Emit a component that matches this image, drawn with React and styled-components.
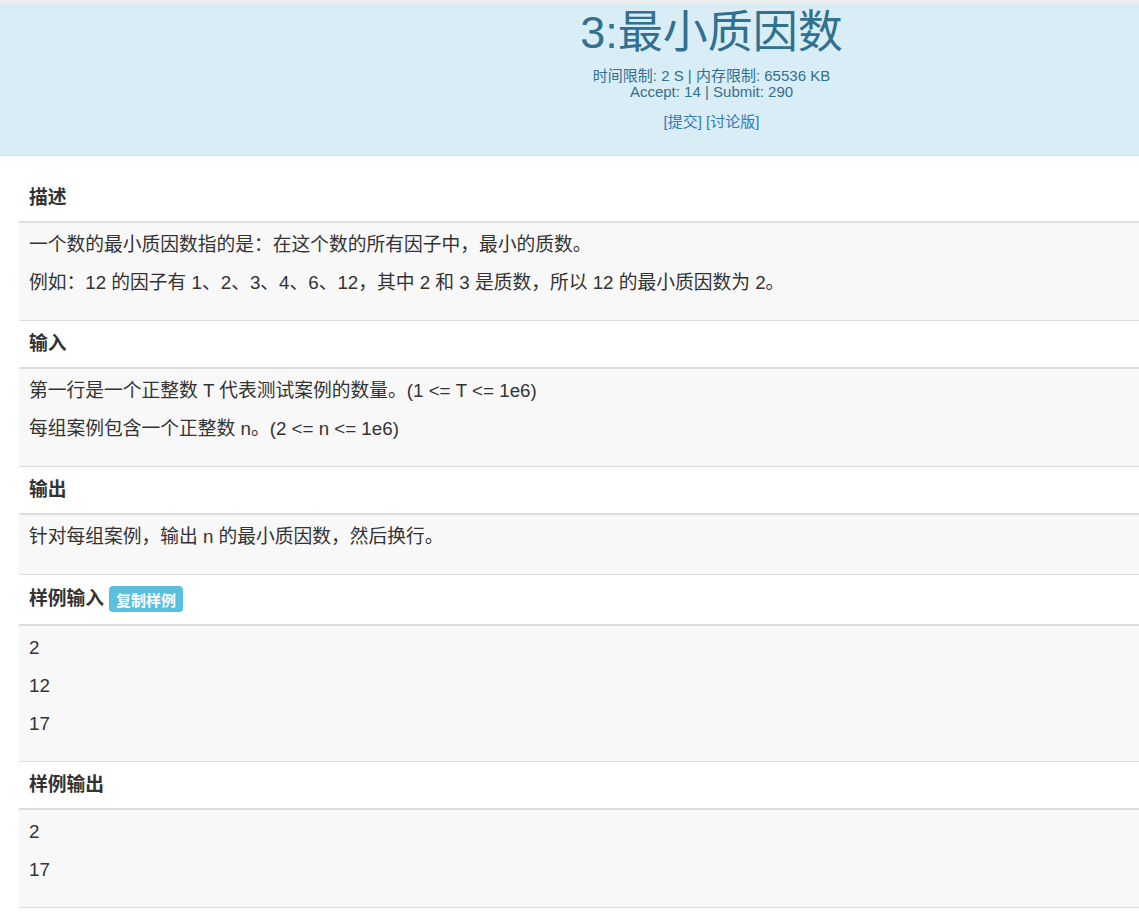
import React from 'react';
import styled, { createGlobalStyle } from 'styled-components';

const GlobalStyle = createGlobalStyle`
  html, body {
    margin: 0;
    padding: 0;
    background: #fff;
  }
  body {
    font-family: "Liberation Sans", Arial, "Noto Sans CJK SC", sans-serif;
    color: #333;
    font-size: 18.75px;
  }
`;

const TopStrip = styled.div`
  height: 3px;
  background: #eeeeee;
`;

const Header = styled.div`
  background: #d9edf7;
  border-bottom: 1px solid #bce8f1;
  color: #31708f;
  text-align: center;
  padding: 5px 0 23px 284px;
`;

const Title = styled.h1`
  margin: 0;
  font-size: 45px;
  font-weight: 400;
  line-height: 49.5px;
`;

const Meta = styled.div`
  margin-top: 10px;
  font-size: 15px;
  line-height: 16.5px;
`;

const Links = styled.div`
  margin-top: 11px;
  font-size: 15px;
  line-height: 20px;

  a {
    color: #337ab7;
    text-decoration: none;
  }
`;

const Content = styled.div`
  padding: 19px 0 0 19px;
`;

const SectionTitle = styled.div`
  display: flex;
  align-items: center;
  gap: 5px;
  padding: ${(p) => (p.$withButton ? '11.5px 10px' : '10px')};
  font-size: 18.75px;
  font-weight: 700;
  line-height: 26px;
  border-bottom: 2px solid #dddddd;
`;

const SectionBody = styled.div`
  background: #f8f8f8;
  border-bottom: 1px solid #dddddd;
  padding: 10px 10px 11px;
`;

const Para = styled.p`
  margin: 0 0 14px;
  line-height: 24px;
`;

const CopyButton = styled.button`
  height: 26px;
  padding: 0 7px;
  border: none;
  border-radius: 4px;
  background: #5bc0de;
  color: #fff;
  font-family: inherit;
  font-size: 15px;
  font-weight: 700;
  cursor: pointer;
`;

const sections = [
  {
    title: '描述',
    lines: [
      '一个数的最小质因数指的是：在这个数的所有因子中，最小的质数。',
      '例如：12 的因子有 1、2、3、4、6、12，其中 2 和 3 是质数，所以 12 的最小质因数为 2。',
    ],
  },
  {
    title: '输入',
    lines: ['第一行是一个正整数 T 代表测试案例的数量。(1 <= T <= 1e6)', '每组案例包含一个正整数 n。(2 <= n <= 1e6)'],
  },
  { title: '输出', lines: ['针对每组案例，输出 n 的最小质因数，然后换行。'] },
  { title: '样例输入', lines: ['2', '12', '17'], copy: true },
  { title: '样例输出', lines: ['2', '17'] },
];

const App = () => (
  <>
    <GlobalStyle />
    <TopStrip />
    <Header>
      <Title>3:最小质因数</Title>
      <Meta>
        时间限制: 2 S | 内存限制: 65536 KB
        <br />
        Accept: 14 | Submit: 290
      </Meta>
      <Links>
        <a href="#">[提交]</a> <a href="#">[讨论版]</a>
      </Links>
    </Header>
    <Content>
      {sections.map((s) => (
        <section key={s.title}>
          <SectionTitle $withButton={s.copy}>
            {s.title}
            {s.copy && <CopyButton>复制样例</CopyButton>}
          </SectionTitle>
          <SectionBody>
            {s.lines.map((line, i) => (
              <Para key={i}>{line}</Para>
            ))}
          </SectionBody>
        </section>
      ))}
    </Content>
  </>
);

export default App;
